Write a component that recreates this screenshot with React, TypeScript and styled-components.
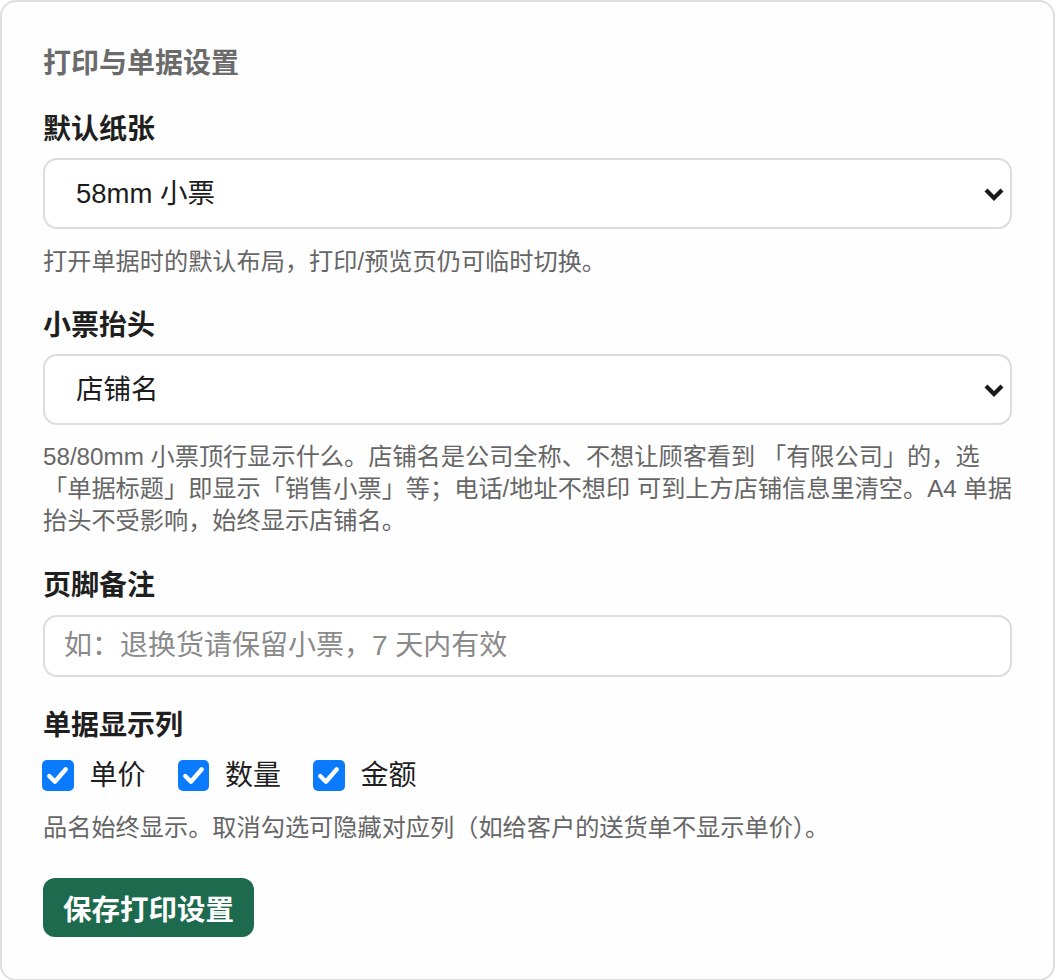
import React from 'react';
import styled, {createGlobalStyle} from 'styled-components';

const GlobalStyle = createGlobalStyle`
  html, body {
    margin: 0;
    padding: 0;
    background: #ffffff;
  }
  body {
    font-family: "Liberation Sans", "Noto Sans CJK SC", sans-serif;
    color: #1f1f1f;
  }
  * {
    box-sizing: border-box;
  }
`;

const Card = styled.div`
  width: 1055px;
  padding: 42px 41px 42px 41px;
  border: 2px solid #dedede;
  border-radius: 16px;
  background: #fefefe;
`;

const Title = styled.h2`
  margin: 0 0 26px;
  font-size: 28px;
  line-height: 40px;
  font-weight: 600;
  color: #6b6b6b;
`;

const Field = styled.div<{$last?: boolean}>`
  display: flex;
  flex-direction: column;
  margin-bottom: ${p => (p.$last ? '0' : '29px')};
`;

const Label = styled.div`
  font-size: 28px;
  line-height: 40px;
  font-weight: 700;
  color: #1f1f1f;
  margin-bottom: 8px;
`;

const SelectWrap = styled.div`
  position: relative;
`;

const Select = styled.select`
  appearance: none;
  -webkit-appearance: none;
  width: 100%;
  height: 71px;
  padding: 0 60px 0 31px;
  border: 2px solid #dcdcdc;
  border-radius: 14px;
  background: #ffffff;
  font-family: inherit;
  font-size: 27.5px;
  color: #1c1c1c;
  outline: none;
`;

const Chevron = styled.svg`
  position: absolute;
  right: 7px;
  top: 50%;
  transform: translateY(-50%);
  pointer-events: none;
`;

const TextInput = styled.input`
  width: 100%;
  height: 62px;
  margin-top: 1px;
  padding: 0 19px;
  border: 2px solid #dcdcdc;
  border-radius: 14px;
  background: #ffffff;
  font-family: inherit;
  font-size: 28px;
  color: #1c1c1c;
  outline: none;

  &::placeholder {
    color: #8a8a8a;
  }
`;

const Hint = styled.p<{$gap?: number; $lines?: boolean}>`
  margin: ${p => p.$gap ?? 17}px 0 0;
  font-size: 24.2px;
  line-height: ${p => (p.$lines ? '31.8px' : '31.2px')};
  color: #666666;
  white-space: ${p => (p.$lines ? 'nowrap' : 'normal')};
`;

const CheckRow = styled.div`
  display: flex;
  align-items: center;
  gap: 33px;
  height: 40px;
  margin-top: 2px;
`;

const CheckItem = styled.label`
  display: flex;
  align-items: center;
  gap: 16px;
  font-size: 28px;
  line-height: 40px;
  color: #1f1f1f;
  cursor: pointer;
`;

const Box = styled.span<{$on: boolean}>`
  display: inline-flex;
  align-items: center;
  justify-content: center;
  width: 31.5px;
  height: 31.5px;
  margin-left: -1px;
  border-radius: 5px;
  background: ${p => (p.$on ? '#0a7aff' : '#ffffff')};
  border: ${p => (p.$on ? 'none' : '2px solid #b5b5b5')};
`;

const SaveButton = styled.button`
  margin-top: 35px;
  height: 59px;
  padding: 0 20px;
  border: none;
  border-radius: 12px;
  background: #1e6a4f;
  color: #ffffff;
  font-family: inherit;
  font-size: 28.5px;
  font-weight: 700;
  cursor: pointer;
`;

const ChevronIcon = () => (
  <Chevron width="22" height="16" viewBox="0 0 22 16">
    <path d="M3 4 L11 12 L19 4" fill="none" stroke="#1a1a1a" strokeWidth="4.2" strokeLinejoin="miter" />
  </Chevron>
);

const columns = [
  {key: 'price', name: '单价'},
  {key: 'qty', name: '数量'},
  {key: 'amount', name: '金额'},
];

export default function App() {
  const [shown, setShown] = React.useState<Record<string, boolean>>({price: true, qty: true, amount: true});
  const [paper, setPaper] = React.useState('58');
  const [header, setHeader] = React.useState('store');

  return (
    <>
      <GlobalStyle />
      <Card>
        <Title>打印与单据设置</Title>

        <Field>
          <Label>默认纸张</Label>
          <SelectWrap>
            <Select value={paper} onChange={e => setPaper(e.target.value)}>
              <option value="58">58mm 小票</option>
              <option value="80">80mm 小票</option>
              <option value="a4">A4 单据</option>
            </Select>
            <ChevronIcon />
          </SelectWrap>
          <Hint $gap={17}>打开单据时的默认布局，打印/预览页仍可临时切换。</Hint>
        </Field>

        <Field>
          <Label>小票抬头</Label>
          <SelectWrap>
            <Select value={header} onChange={e => setHeader(e.target.value)}>
              <option value="store">店铺名</option>
              <option value="title">单据标题</option>
            </Select>
            <ChevronIcon />
          </SelectWrap>
          <Hint $gap={16} $lines>
            58/80mm 小票顶行显示什么。店铺名是公司全称、不想让顾客看到 「有限公司」的，选
            <br />
            「单据标题」即显示「销售小票」等；电话/地址不想印 可到上方店铺信息里清空。A4 单据
            <br />
            抬头不受影响，始终显示店铺名。
          </Hint>
        </Field>

        <Field>
          <Label>页脚备注</Label>
          <TextInput placeholder="如：退换货请保留小票，7 天内有效" />
        </Field>

        <Field $last>
          <Label>单据显示列</Label>
          <CheckRow>
            {columns.map(c => (
              <CheckItem key={c.key} onClick={() => setShown(s => ({...s, [c.key]: !s[c.key]}))}>
                <Box $on={shown[c.key]}>
                  {shown[c.key] && (
                    <svg width="31" height="31" viewBox="0 0 30 30">
                      <path d="M7 15.5 L12.5 21 L23 9" fill="none" stroke="#ffffff" strokeWidth="4.2" strokeLinecap="round" strokeLinejoin="round" />
                    </svg>
                  )}
                </Box>
                {c.name}
              </CheckItem>
            ))}
          </CheckRow>
          <Hint $gap={16}>品名始终显示。取消勾选可隐藏对应列（如给客户的送货单不显示单价）。</Hint>
        </Field>

        <SaveButton>保存打印设置</SaveButton>
      </Card>
    </>
  );
}
